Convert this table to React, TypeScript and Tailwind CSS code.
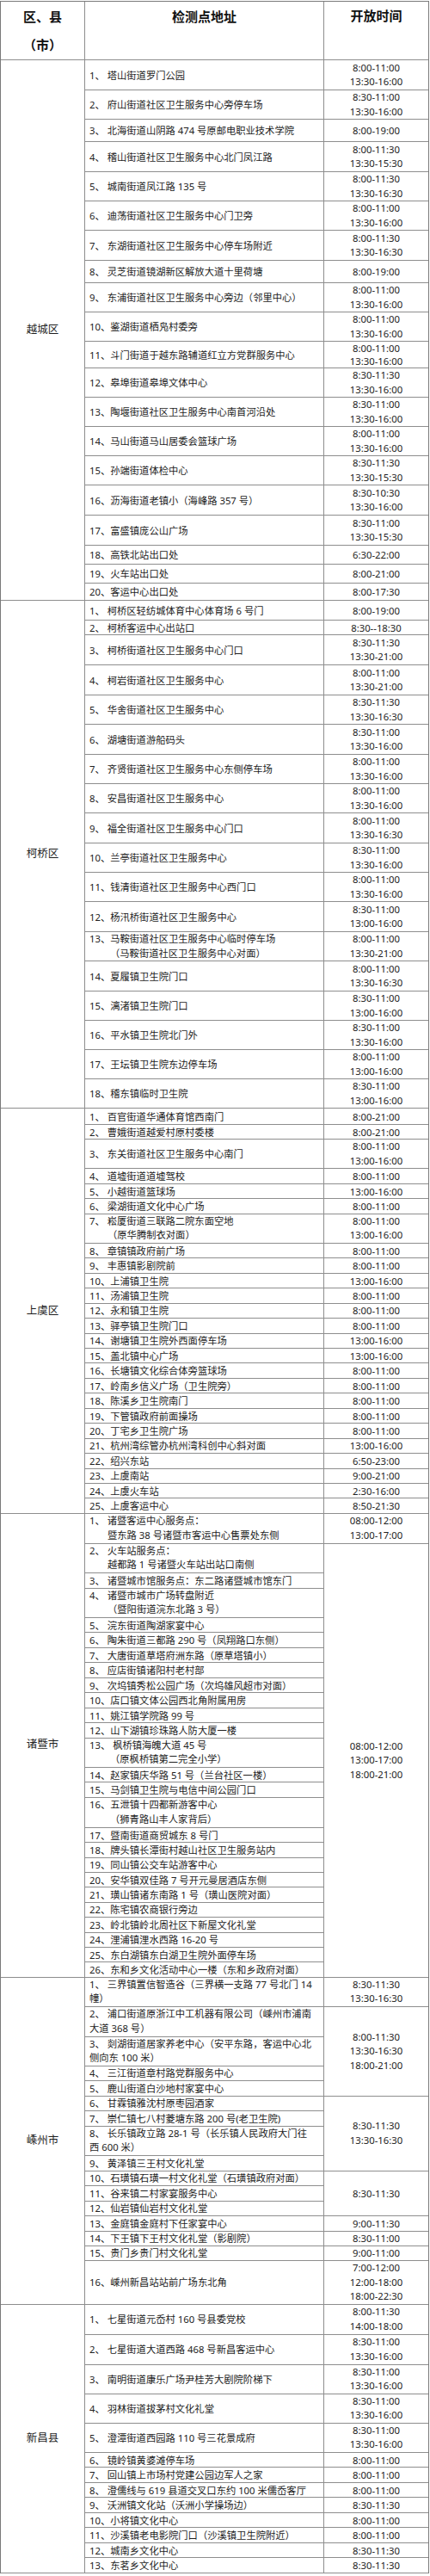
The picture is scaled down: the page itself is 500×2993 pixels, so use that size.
type Row = { t: string[]; h: string; ind?: string }
type Group = { rows: Row[]; time: string[]; tight?: boolean }
type Section = { name: string; groups: Group[] }

const row = (t: string | string[], h: string, ind?: string): Row => ({
  t: Array.isArray(t) ? t : [t],
  h,
  ind,
})

const one = (t: string | string[], h: string, time: string[], ind?: string): Group => ({
  rows: [row(t, h, ind)],
  time,
})

const AM_PM = (a: string, b: string) => [a, b]

const sections: Section[] = [
  {
    name: '越城区',
    groups: [
      one('1、 塔山街道罗门公园', 'h-[35px]', AM_PM('8:00-11:00', '13:30-16:00')),
      one('2、 府山街道社区卫生服务中心旁停车场', 'h-[34px]', AM_PM('8:30-11:00', '13:30-16:00')),
      one('3、 北海街道山阴路 474 号原邮电职业技术学院', 'h-[26px]', ['8:00-19:00']),
      one('4、 稽山街道社区卫生服务中心北门凤江路', 'h-[35px]', AM_PM('8:00-11:30', '13:30-15:30')),
      one('5、 城南街道凤江路 135 号', 'h-[34px]', AM_PM('8:00-11:30', '13:30-16:30')),
      one('6、 迪荡街道社区卫生服务中心门卫旁', 'h-[34px]', AM_PM('8:00-11:00', '13:30-16:00')),
      one('7、 东湖街道社区卫生服务中心停车场附近', 'h-[35px]', AM_PM('8:00-11:30', '13:30-16:30')),
      one('8、 灵芝街道镜湖新区解放大道十里荷塘', 'h-[26px]', ['8:00-19:00']),
      one('9、 东浦街道社区卫生服务中心旁边（邻里中心）', 'h-[34px]', AM_PM('8:00-11:00', '13:30-16:00')),
      one('10、鉴湖街道栖凫村委旁', 'h-[34px]', AM_PM('8:00-11:00', '13:30-16:00')),
      { rows: [row('11、斗门街道于越东路辅道红立方党群服务中心', 'h-[31px]')], time: AM_PM('8:00-11:00', '13:30-16:00'), tight: true },
      one('12、皋埠街道皋埠文体中心', 'h-[34px]', AM_PM('8:30-11:30', '13:30-16:00')),
      one('13、陶堰街道社区卫生服务中心南首河沿处', 'h-[34px]', AM_PM('8:30-11:00', '13:30-16:00')),
      one('14、马山街道马山居委会篮球广场', 'h-[34px]', AM_PM('8:00-11:00', '13:30-16:00')),
      one('15、孙端街道体检中心', 'h-[34px]', AM_PM('8:30-11:30', '13:30-15:30')),
      one('16、沥海街道老镇小（海峰路 357 号）', 'h-[35px]', AM_PM('8:30-10:30', '13:30-16:00')),
      one('17、富盛镇庞公山广场', 'h-[35px]', AM_PM('8:30-11:00', '13:30-15:30')),
      one('18、高铁北站出口处', 'h-[22px]', ['6:30-22:00']),
      one('19、火车站出口处', 'h-[22px]', ['8:00-21:00']),
      one('20、客运中心出口处', 'h-[20px]', ['8:00-17:30']),
    ],
  },
  {
    name: '柯桥区',
    groups: [
      one('1、 柯桥区轻纺城体育中心体育场 6 号门', 'h-[23px]', ['8:00-19:00']),
      one('2、 柯桥客运中心出站口', 'h-[17px]', ['8:30--18:30']),
      one('3、 柯桥街道社区卫生服务中心门口', 'h-[35px]', AM_PM('8:30-11:30', '13:30-21:00')),
      one('4、 柯岩街道社区卫生服务中心', 'h-[35px]', AM_PM('8:00-11:00', '13:30-21:00')),
      one('5、 华舍街道社区卫生服务中心', 'h-[34px]', AM_PM('8:30-11:30', '13:30-16:30')),
      one('6、 湖塘街道游船码头', 'h-[35px]', AM_PM('8:30-11:00', '13:30-16:00')),
      one('7、 齐贤街道社区卫生服务中心东侧停车场', 'h-[34px]', AM_PM('8:00-11:00', '13:30-16:00')),
      one('8、 安昌街道社区卫生服务中心', 'h-[34px]', AM_PM('8:00-11:00', '13:30-16:00')),
      one('9、 福全街道社区卫生服务中心门口', 'h-[35px]', AM_PM('8:00-11:00', '13:30-16:30')),
      one('10、兰亭街道社区卫生服务中心', 'h-[34px]', AM_PM('8:30-11:00', '13:30-16:00')),
      one('11、钱清街道社区卫生服务中心西门口', 'h-[34px]', AM_PM('8:00-11:00', '13:30-16:00')),
      one('12、杨汛桥街道社区卫生服务中心', 'h-[35px]', AM_PM('8:30-11:00', '13:00-16:00')),
      one(['13、马鞍街道社区卫生服务中心临时停车场', '（马鞍街道社区卫生服务中心对面）'], 'h-[34px]', AM_PM('8:00-11:00', '13:30-21:00'), 'pl-[24px]'),
      one('14、夏履镇卫生院门口', 'h-[35px]', AM_PM('8:00-11:00', '13:30-16:30')),
      one('15、漓渚镇卫生院门口', 'h-[34px]', AM_PM('8:30-11:00', '13:00-16:00')),
      one('16、平水镇卫生院北门外', 'h-[34px]', AM_PM('8:30-11:00', '13:30-16:00')),
      one('17、王坛镇卫生院东边停车场', 'h-[34px]', AM_PM('8:00-11:00', '13:00-16:00')),
      one('18、稽东镇临时卫生院', 'h-[34px]', AM_PM('8:30-11:00', '13:00-16:00')),
    ],
  },
  {
    name: '上虞区',
    groups: [
      one('1、 百官街道华通体育馆西南门', 'h-[19px]', ['8:00-21:00']),
      one('2、 曹娥街道越爱村原村委楼', 'h-[17px]', ['8:00-21:00']),
      one('3、 东关街道社区卫生服务中心南门', 'h-[34px]', AM_PM('8:00-11:00', '13:00-16:00')),
      one('4、 道墟街道道墟驾校', 'h-[17.7px]', ['8:00-11:00']),
      one('5、 小越街道篮球场', 'h-[17.7px]', ['13:00-16:00']),
      one('6、 梁湖街道文化中心广场', 'h-[17.6px]', ['8:00-11:00']),
      one(['7、 崧厦街道三联路二院东面空地', '（原华腾制衣对面）'], 'h-[34px]', AM_PM('8:00-11:00', '13:00-16:00'), 'pl-[21px]'),
      one('8、 章镇镇政府前广场', 'h-[17.44px]', ['8:00-11:00']),
      one('9、 丰惠镇影剧院前', 'h-[17.44px]', ['8:00-11:00']),
      one('10、上浦镇卫生院', 'h-[17.44px]', ['13:00-16:00']),
      one('11、汤浦镇卫生院', 'h-[17.44px]', ['8:00-11:00']),
      one('12、永和镇卫生院', 'h-[17.44px]', ['8:00-11:00']),
      one('13、驿亭镇卫生院门口', 'h-[17.44px]', ['8:00-11:00']),
      one('14、谢塘镇卫生院外西面停车场', 'h-[17.44px]', ['13:00-16:00']),
      one('15、盖北镇中心广场', 'h-[17.44px]', ['13:00-16:00']),
      one('16、长塘镇文化综合体旁篮球场', 'h-[17.44px]', ['8:00-11:00']),
      one('17、岭南乡信义广场（卫生院旁）', 'h-[17.44px]', ['8:00-11:00']),
      one('18、陈溪乡卫生院南门', 'h-[17.44px]', ['8:00-11:00']),
      one('19、下管镇政府前面操场', 'h-[17.44px]', ['8:00-11:00']),
      one('20、丁宅乡卫生院广场', 'h-[17.44px]', ['8:00-11:00']),
      one('21、杭州湾综管办杭州湾科创中心斜对面', 'h-[17.44px]', ['13:00-16:00']),
      one('22、绍兴东站', 'h-[17.44px]', ['6:50-23:00']),
      one('23、上虞南站', 'h-[17.44px]', ['9:00-21:00']),
      one('24、上虞火车站', 'h-[17.44px]', ['2:30-16:00']),
      one('25、上虞客运中心', 'h-[17.44px]', ['8:50-21:30']),
    ],
  },
  {
    name: '诸暨市',
    groups: [
      one(['1、 诸暨客运中心服务点：', '暨东路 38 号诸暨市客运中心售票处东侧'], 'h-[35px]', AM_PM('08:00-12:00', '13:00-17:00'), 'pl-[21px]'),
      {
        time: ['08:00-12:00', '13:00-17:00', '18:00-21:00'],
        rows: [
          row(['2、 火车站服务点：', '越都路 1 号诸暨火车站出站口南侧'], 'h-[34px]', 'pl-[21px]'),
          row('3、 诸暨城市馆服务点：东二路诸暨城市馆东门', 'h-[18px]'),
          row(['4、 诸暨市城市广场转盘附近', '（暨阳街道浣东北路 3 号）'], 'h-[34px]', 'pl-[21px]'),
          row('5、 浣东街道陶湖家宴中心', 'h-[17.5px]'),
          row('6、 陶朱街道三都路 290 号（凤翔路口东侧）', 'h-[17.5px]'),
          row('7、 大唐街道草塔府洲东路（原草塔镇小）', 'h-[17.5px]'),
          row('8、 应店街镇诸阳村老村部', 'h-[17.5px]'),
          row('9、 次坞镇秀松公园广场（次坞雄风超市对面）', 'h-[17.5px]'),
          row('10、店口镇文体公园西北角附属用房', 'h-[17.5px]'),
          row('11、姚江镇学院路 99 号', 'h-[17.5px]'),
          row('12、山下湖镇珍珠路人防大厦一楼', 'h-[17.5px]'),
          row(['13、 枫桥镇海魄大道 45 号', '（原枫桥镇第二完全小学）'], 'h-[34px]', 'pl-[24px]'),
          row('14、赵家镇庆华路 51 号（兰台社区一楼）', 'h-[17.5px]'),
          row('15、马剑镇卫生院与电信中间公园门口', 'h-[17.5px]'),
          row(['16、五泄镇十四都新游客中心', '（狮青路山丰人家背后）'], 'h-[35px]', 'pl-[24px]'),
          row('17、暨南街道商贸城东 8 号门', 'h-[17.4px]'),
          row('18、牌头镇长潭街村越山社区卫生服务站内', 'h-[17.4px]'),
          row('19、同山镇公交车站游客中心', 'h-[17.4px]'),
          row('20、安华镇双佳路 7 号开元曼居酒店东侧', 'h-[17.4px]'),
          row('21、璜山镇诸东南路 1 号（璜山医院对面）', 'h-[17.4px]'),
          row('22、陈宅镇农商银行旁边', 'h-[17.4px]'),
          row('23、岭北镇岭北周社区下新屋文化礼堂', 'h-[17.4px]'),
          row('24、浬浦镇浬水西路 16-20 号', 'h-[17.4px]'),
          row('25、东白湖镇东白湖卫生院外面停车场', 'h-[17.4px]'),
          row('26、东和乡文化活动中心一楼（东和乡政府对面）', 'h-[17.4px]'),
        ],
      },
    ],
  },
  {
    name: '嵊州市',
    groups: [
      one(['1、 三界镇置信智造谷（三界横一支路 77 号北门 14', '幢）'], 'h-[34px]', AM_PM('8:30-11:30', '13:30-16:30')),
      {
        time: ['8:00-11:30', '13:30-16:30', '18:00-21:00'],
        rows: [
          row(['2、 浦口街道原浙江中工机器有限公司（嵊州市浦南', '大道 368 号）'], 'h-[35px]'),
          row(['3、 剡湖街道居家养老中心（安平东路，客运中心北', '侧向东 100 米）'], 'h-[34px]'),
          row('4、 三江街道章村路党群服务中心', 'h-[17px]'),
          row('5、 鹿山街道白沙地村家宴中心', 'h-[18px]'),
        ],
      },
      {
        time: AM_PM('8:30-11:30', '13:30-16:30'),
        rows: [
          row('6、 甘霖镇雅沈村原枣园酒家', 'h-[17px]'),
          row('7、 崇仁镇七八村菱塘东路 200 号(老卫生院)', 'h-[18px]'),
          row(['8、 长乐镇政立路 28-1 号（长乐镇人民政府大门往', '西 600 米）'], 'h-[34px]'),
          row('9、 黄泽镇三王村文化礼堂', 'h-[18px]'),
        ],
      },
      {
        time: ['8:30-11:30'],
        rows: [
          row('10、石璜镇石璜一村文化礼堂（石璜镇政府对面）', 'h-[17px]'),
          row('11、谷来镇二村家宴服务中心', 'h-[18px]'),
          row('12、仙岩镇仙岩村文化礼堂', 'h-[17px]'),
        ],
      },
      one('13、金庭镇金庭村下任家宴中心', 'h-[18px]', ['9:00-11:30']),
      one('14、下王镇下王村文化礼堂（影剧院）', 'h-[17px]', ['8:30-11:00']),
      one('15、贵门乡贵门村文化礼堂', 'h-[17px]', ['9:00-11:00']),
      one('16、嵊州新昌站站前广场东北角', 'h-[51px]', ['7:00-12:00', '12:00-18:00', '18:00-22:30']),
    ],
  },
  {
    name: '新昌县',
    groups: [
      one('1、 七星街道元岙村 160 号县委党校', 'h-[35px]', AM_PM('8:00-11:30', '14:00-18:00')),
      one('2、 七星街道大道西路 468 号新昌客运中心', 'h-[35px]', AM_PM('8:30-11:00', '13:30-16:00')),
      one('3、 南明街道康乐广场尹桂芳大剧院阶梯下', 'h-[34px]', AM_PM('8:30-11:00', '13:30-16:00')),
      one('4、 羽林街道拔茅村文化礼堂', 'h-[34px]', AM_PM('8:30-11:00', '13:30-16:00')),
      one('5、 澄潭街道西园路 110 号三花景成府', 'h-[34px]', AM_PM('8:30-11:00', '13:30-16:00')),
      one('6、 镜岭镇黄婆滩停车场', 'h-[17.5px]', ['8:00-11:00']),
      one('7、 回山镇上市场村党建公园边军人之家', 'h-[17.5px]', ['8:00-11:00']),
      one('8、 澄儒线与 619 县道交叉口东约 100 米儒岙客厅', 'h-[17.5px]', ['8:00-11:00']),
      one('9、 沃洲镇文化站（沃洲小学操场边）', 'h-[17.5px]', ['8:30-11:30']),
      one('10、小将镇文化中心', 'h-[17.5px]', ['8:00-11:00']),
      one('11、沙溪镇老电影院门口（沙溪镇卫生院附近）', 'h-[17.5px]', ['8:00-11:00']),
      one('12、城南乡文化中心', 'h-[17.5px]', ['8:30-11:30']),
      one('13、东茗乡文化中心', 'h-[17.5px]', ['8:30-11:30']),
    ],
  },
]

// single lines get a shorter line box so they sit inside 17px rows
const lead = (n: number, tight?: boolean) =>
  tight ? 'leading-[15px]' : n > 1 ? 'leading-[16.5px]' : 'leading-[15px]'

const SectionBlock = ({ s }: { s: Section }) => (
  <div className="flex">
    <div className="w-[98px] shrink-0 border-r border-b border-[#8e8e8e] flex items-center justify-center text-[12.5px] text-[#1e1e1e]">
      {s.name}
    </div>
    <div className="flex-1 flex flex-col">
      {s.groups.map((g, gi) => (
        <div key={gi} className="flex">
          <div className="w-[278px] shrink-0 border-r border-[#8e8e8e] flex flex-col">
            {g.rows.map((r, ri) => (
              <div
                key={ri}
                className={`${r.h} ${lead(r.t.length)} border-b border-[#8e8e8e] flex flex-col justify-center pl-[5px] whitespace-nowrap`}
              >
                {r.t.map((l, li) => (
                  <div key={li} className={li > 0 && r.ind ? r.ind : ''}>
                    {l}
                  </div>
                ))}
              </div>
            ))}
          </div>
          <div
            className={`flex-1 border-b border-[#8e8e8e] flex flex-col items-center justify-center ${lead(g.time.length, g.tight)}`}
          >
            {g.time.map((t, ti) => (
              <div key={ti}>{t}</div>
            ))}
          </div>
        </div>
      ))}
    </div>
  </div>
)

export default function App() {
  return (
    <div className="w-[500px] min-h-[2993px] bg-white pt-[1px] font-['Noto_Sans','Noto_Sans_CJK_SC',sans-serif] text-[11.3px] text-[#222]">
      <div className="w-[499px] border-l border-t border-r border-[#7a7a7a]">
        <div className="flex h-[68px] border-b border-[#8e8e8e] font-bold text-[15px] text-[#111] leading-[33px]">
          <div className="w-[98px] shrink-0 border-r border-[#8e8e8e] text-center pt-px">
            区、县
            <br />
            （市）
          </div>
          <div className="w-[278px] shrink-0 border-r border-[#8e8e8e] text-center pt-px">检测点地址</div>
          <div className="flex-1 text-center">开放时间</div>
        </div>
        {sections.map((s) => (
          <SectionBlock key={s.name} s={s} />
        ))}
      </div>
    </div>
  )
}
